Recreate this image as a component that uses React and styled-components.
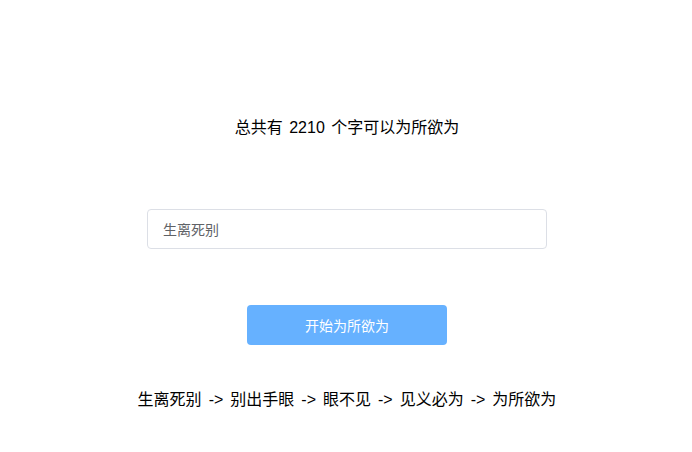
import React, { useState } from "react";
import styled, { createGlobalStyle } from "styled-components";

const GlobalStyle = createGlobalStyle`
  body {
    margin: 0;
    background: #fff;
    font-family: "Liberation Sans", "Noto Sans CJK SC", sans-serif;
  }
`;

const Page = styled.div`
  display: flex;
  flex-direction: column;
  align-items: center;
  padding: 116px 0 0 2px;
`;

const Title = styled.div`
  font-size: 16px;
  line-height: 24px;
  color: #000;
  word-spacing: 2px;
  margin-bottom: 69px;
`;

const Input = styled.input`
  box-sizing: border-box;
  width: 400px;
  height: 40px;
  padding: 0 15px;
  border: 1px solid #dcdfe6;
  border-radius: 4px;
  font-family: inherit;
  font-size: 14px;
  color: #606266;
  outline: none;
  margin-bottom: 56px;
  &::placeholder {
    color: #c0c4cc;
  }
`;

const Button = styled.button`
  width: 200px;
  height: 40px;
  border: none;
  border-radius: 4px;
  background: #66b1ff;
  color: #fff;
  font-family: inherit;
  font-size: 14px;
  cursor: pointer;
  margin-bottom: 43px;
`;

const Chain = styled.div`
  display: flex;
  align-items: center;
  gap: 7px;
  font-size: 16px;
  line-height: 24px;
  color: #000;
`;

const Step = styled.span``;

const Arrow = styled.span``;

const chain = ["生离死别", "别出手眼", "眼不见", "见义必为", "为所欲为"];

export default function App() {
  const [word, setWord] = useState("生离死别");
  return (
    <>
      <GlobalStyle />
      <Page>
        <Title>总共有 2210 个字可以为所欲为</Title>
        <Input value={word} onChange={(e) => setWord(e.target.value)} />
        <Button>开始为所欲为</Button>
        <Chain>
          {chain.map((w, i) => (
            <React.Fragment key={w}>
              {i > 0 && <Arrow>-&gt;</Arrow>}
              <Step>{w}</Step>
            </React.Fragment>
          ))}
        </Chain>
      </Page>
    </>
  );
}
